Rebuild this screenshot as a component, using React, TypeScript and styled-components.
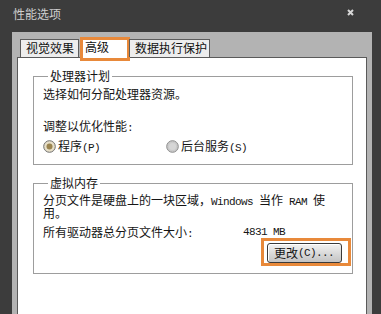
import React from 'react';
import styled, { createGlobalStyle } from 'styled-components';

const Global = createGlobalStyle`
  html, body { margin: 0; padding: 0; background: #3c3c3c; }
  body { font-family: "Noto Sans CJK SC", "Liberation Sans", sans-serif; }
`;

const Win = styled.div`
  width: 381px;
  height: 314px;
  overflow: hidden;
  display: flex;
  flex-direction: column;
  background: #3c3c3c;
`;

const TitleBar = styled.div`
  height: 32px;
  box-sizing: border-box;
  padding: 7px 0 0 13px;
  display: flex;
  align-items: flex-start;
  justify-content: space-between;
  color: #cfcfcf;
  font-size: 12px;
  line-height: 14px;
`;

const CloseBtn = styled.div`
  width: 7px;
  height: 7px;
  margin: 2px 27px 0 0;
  display: flex;
`;

const Frame = styled.div`
  flex: 1;
  margin-left: 12px;
  width: 360px;
  box-sizing: border-box;
  background: #b3b3b3;
  padding: 6px 5px 0 5px;
  display: flex;
  flex-direction: column;
`;

const Tabs = styled.div`
  display: flex;
  align-items: flex-end;
  padding-left: 3px;
  position: relative;
  z-index: 1;
`;

const Tab = styled.div<{ $w: number; $active?: boolean }>`
  width: ${p => p.$w}px;
  height: ${p => (p.$active ? 20 : 18)}px;
  margin-bottom: ${p => (p.$active ? -1 : 0)}px;
  box-sizing: border-box;
  border: 1px solid #5c5c5c;
  border-bottom: none;
  background: ${p => (p.$active ? '#fff' : '#ededed')};
  font-size: 12px;
  line-height: 16px;
  color: #111;
  padding-left: ${p => (p.$active ? 4 : 5)}px;
  margin-right: ${p => (p.$w === 59 ? 1 : 0)}px;
  position: relative;
  ${p =>
    p.$active &&
    `&::after {
      content: '';
      position: absolute;
      top: -2px; left: -1px; right: -2px; bottom: -3px;
      border: 3px solid #e8893a;
      pointer-events: none;
    }`}
`;

const Panel = styled.div`
  flex: 1;
  background: #fff;
  border: 1px solid #5a5a5a;
  border-bottom: none;
  padding: 11px 13px 0 15px;
  display: flex;
  flex-direction: column;
  gap: 11px;
  color: #151515;
  font-size: 12px;
`;

const Group = styled.fieldset<{ $pb: number }>`
  margin: 0;
  padding: 0 9px ${p => p.$pb}px 9px;
  border: 1px solid #9d9d9d;
  min-width: 0;
`;

const Legend = styled.legend`
  padding: 0 2px;
  margin-left: 5px;
  height: 14px;
  line-height: 14px;
  font-size: 12px;
`;

const Line = styled.div<{ $top: number; $lh?: number }>`
  margin-top: ${p => p.$top}px;
  height: ${p => p.$lh || 14}px;
  line-height: ${p => p.$lh || 14}px;
  white-space: nowrap;
`;

const Latin = styled.span`
  font-family: "Liberation Mono", monospace;
  font-size: 11px;
  letter-spacing: -0.6px;
  line-height: 1;
`;

const RadioRow = styled.div`
  margin-top: 6px;
  display: flex;
  align-items: center;
  height: 14px;
  line-height: 14px;
`;

const RadioItem = styled.label<{ $w?: number }>`
  display: flex;
  align-items: center;
  gap: 2px;
  width: ${p => p.$w || 'auto'}px;
`;

const SizeRow = styled.div`
  margin-top: 6px;
  height: 14px;
  line-height: 14px;
  display: flex;
  align-items: center;
`;

const SizeLabel = styled.span`
  width: 200px;
`;

const BtnRow = styled.div`
  margin-top: 4px;
  display: flex;
  justify-content: flex-end;
  padding-right: 1px;
`;

const Button = styled.div`
  width: 75px;
  height: 20px;
  box-sizing: border-box;
  border: 1px solid #3a3a3a;
  border-radius: 3px;
  background: linear-gradient(#f2f2f2, #d6d6d6 60%, #c4c4c4);
  box-shadow: inset 1px 1px 0 #fff;
  display: flex;
  align-items: center;
  padding-left: 6px;
  line-height: 14px;
  position: relative;
  &::after {
    content: '';
    position: absolute;
    top: -6px; left: -7px; right: -10px; bottom: -4px;
    border: 3px solid #e8893a;
    pointer-events: none;
  }
`;

const Radio: React.FC<{ on?: boolean }> = ({ on }) => (
  <svg width="13" height="13" viewBox="0 0 13 13">
    <circle cx="6.5" cy="6.5" r="5.8" fill={on ? '#e7dfc8' : '#cacaca'} stroke={on ? '#6f6f6f' : '#8c8c8c'} strokeWidth="1" />
    {on ? <circle cx="6.5" cy="6.5" r="3" fill="#9a8450" /> : <circle cx="6.5" cy="6.5" r="3.5" fill="#d6d6d6" />}
  </svg>
);

export default function App() {
  return (
    <Win>
      <Global />
      <TitleBar>
        <span>性能选项</span>
        <CloseBtn>
          <svg width="7" height="7" viewBox="0 0 7 7">
            <path d="M1 1L6 6M6 1L1 6" stroke="#d8d8d8" strokeWidth="2" />
          </svg>
        </CloseBtn>
      </TitleBar>
      <Frame>
        <Tabs>
          <Tab $w={59}>视觉效果</Tab>
          <Tab $w={49} $active>高级</Tab>
          <Tab $w={81}>数据执行保护</Tab>
        </Tabs>
        <Panel>
          <Group $pb={11}>
            <Legend>处理器计划</Legend>
            <Line $top={4}>选择如何分配处理器资源。</Line>
            <Line $top={18}>调整以优化性能<Latin>:</Latin></Line>
            <RadioRow>
              <RadioItem $w={123}>
                <Radio on />
                <span>程序<Latin>(P)</Latin></span>
              </RadioItem>
              <RadioItem>
                <Radio />
                <span>后台服务<Latin>(S)</Latin></span>
              </RadioItem>
            </RadioRow>
          </Group>
          <Group $pb={10}>
            <Legend>虚拟内存</Legend>
            <Line $top={3} $lh={13}>
              分页文件是硬盘上的一块区域，<Latin>Windows </Latin>当作<Latin> RAM </Latin>使
            </Line>
            <Line $top={0} $lh={13}>用。</Line>
            <SizeRow>
              <SizeLabel>所有驱动器总分页文件大小<Latin>:</Latin></SizeLabel>
              <Latin>4831 MB</Latin>
            </SizeRow>
            <BtnRow>
              <Button>更改<Latin>(C)...</Latin></Button>
            </BtnRow>
          </Group>
        </Panel>
      </Frame>
    </Win>
  );
}
